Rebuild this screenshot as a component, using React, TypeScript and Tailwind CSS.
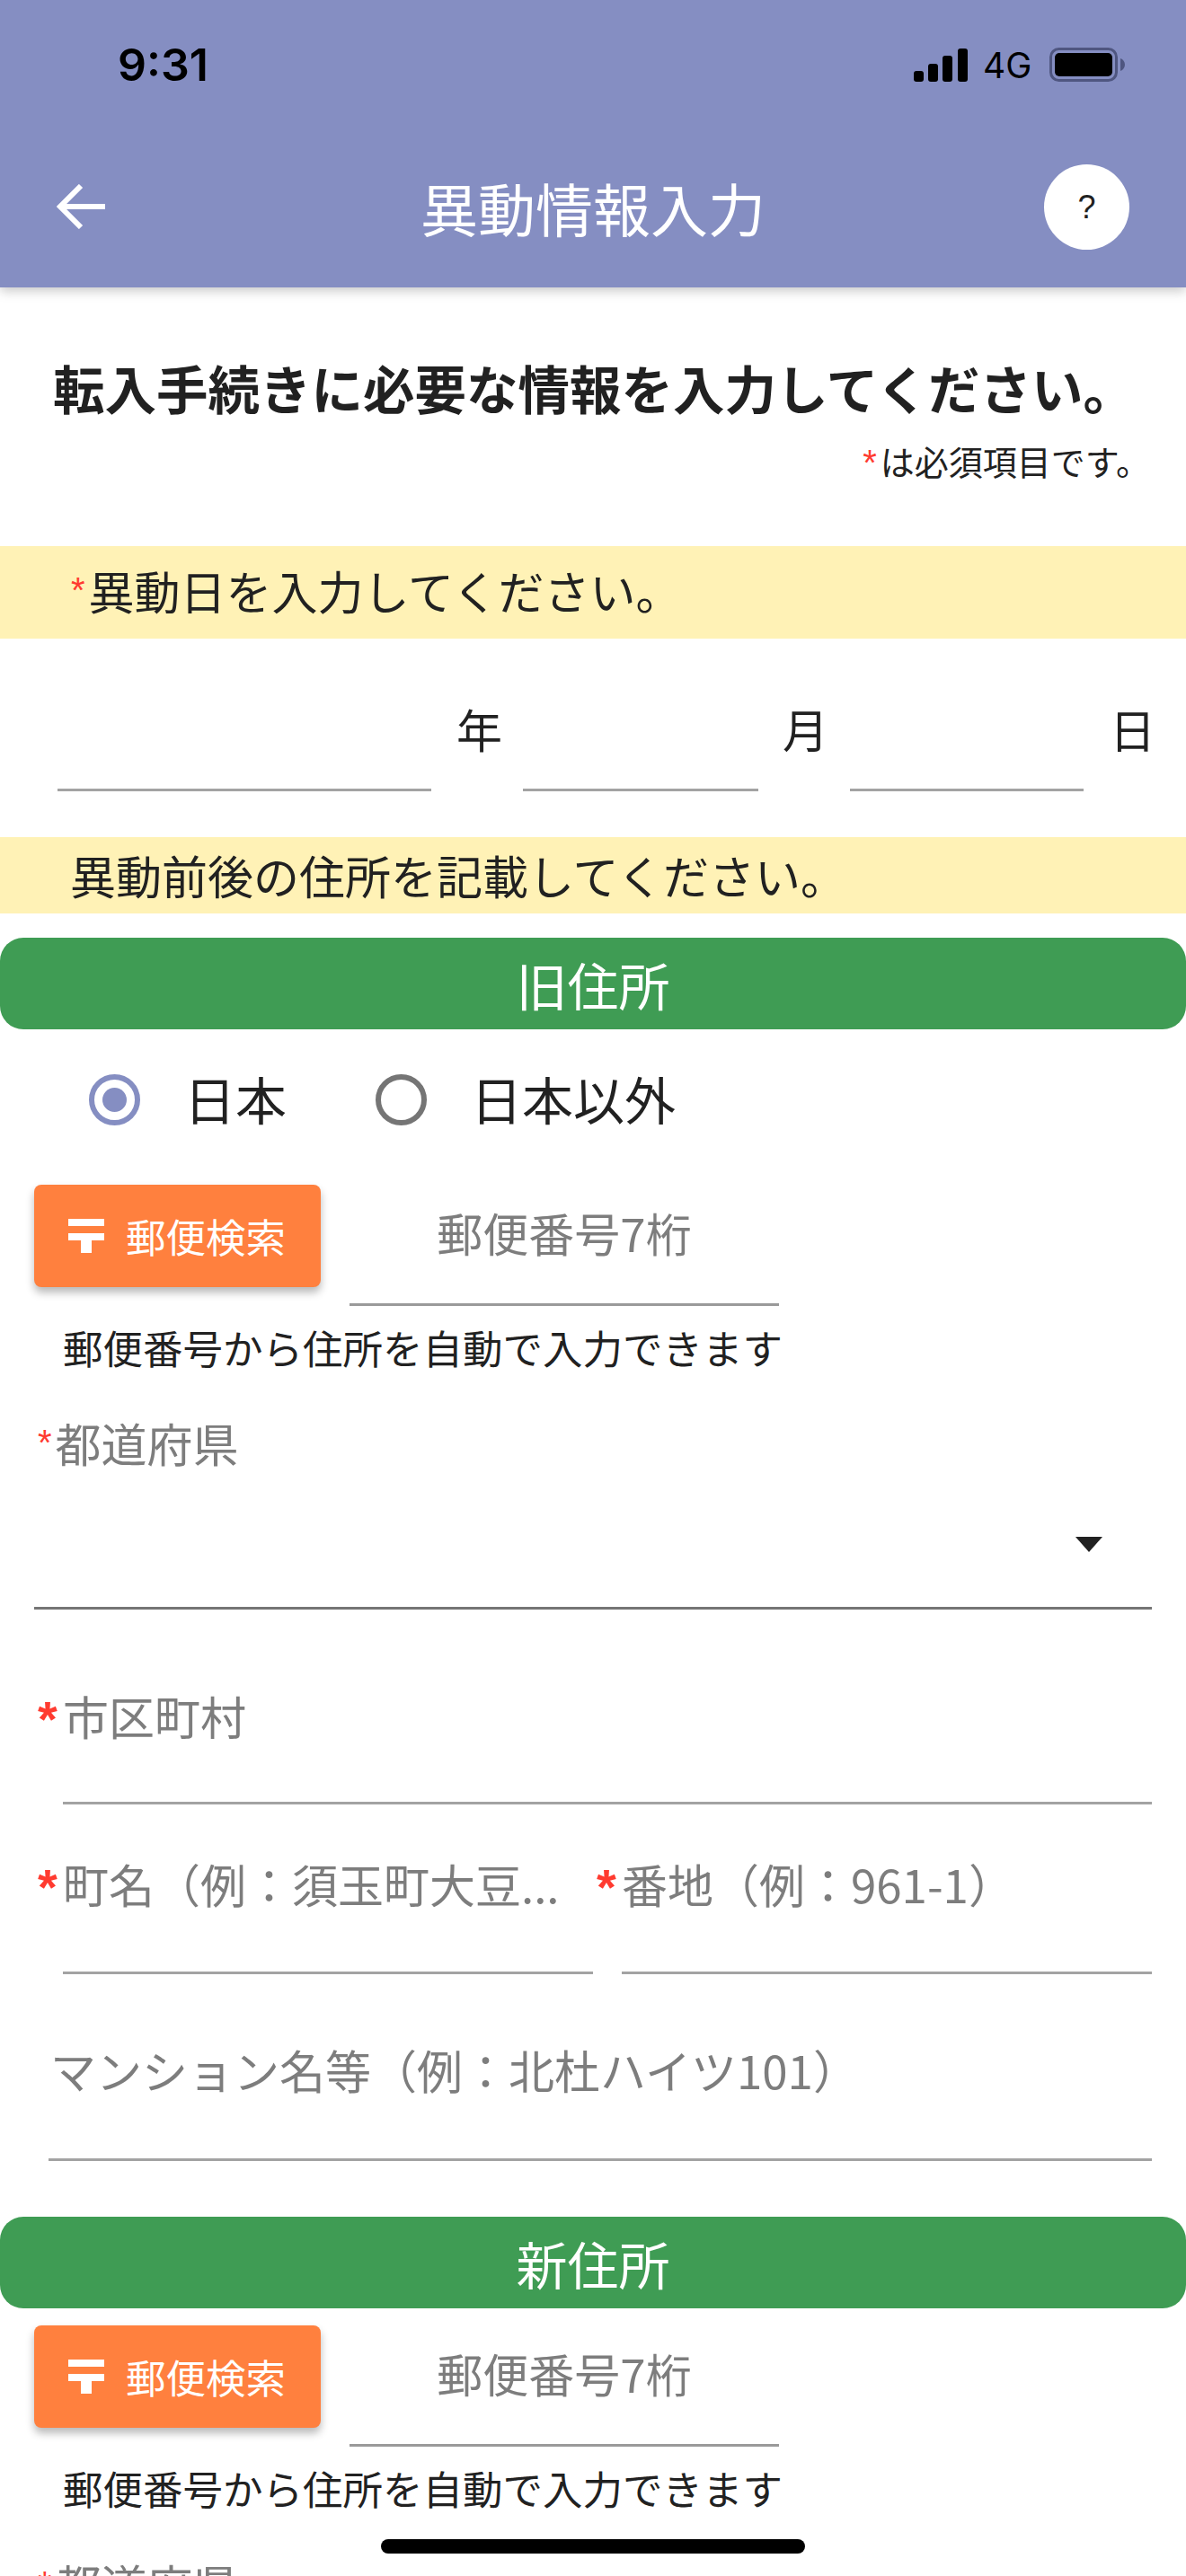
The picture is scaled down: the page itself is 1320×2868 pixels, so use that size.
import React from 'react';

const font = { fontFamily: '"Noto Sans CJK JP", sans-serif' };

const PostMark = () => (
  <svg viewBox="0 0 40 38" className="h-[38px] w-[40px] shrink-0" fill="#fff">
    <rect x="0" y="0" width="40" height="8" />
    <rect x="0" y="16" width="40" height="8" />
    <rect x="14" y="16" width="12" height="22" />
  </svg>
);

const Star = ({ size = 'small' }: { size?: 'small' | 'large' }) => (
  <span
    className={
      size === 'large'
        ? "ml-[4px] -mt-[4px] h-[44px] w-[28px] shrink-0 font-['Liberation_Sans'] text-[56px] font-bold leading-none text-[#ff3b30]"
        : "mr-[4px] font-['Liberation_Sans'] text-[40px] leading-none text-[#ff3b30]"
    }
  >
    *
  </span>
);

const SectionBar = ({ children }: { children: React.ReactNode }) => (
  <div className="flex h-[102px] items-center justify-center rounded-[26px] bg-[#3f9c54] text-[57px] leading-none text-white">
    {children}
  </div>
);

const PostalRow = () => (
  <>
    <div className="flex pl-[38px]">
      <div className="flex h-[114px] w-[319px] items-center gap-[24px] rounded-[8px] bg-[#ff803e] pl-[38px] leading-none text-white shadow-[0_6px_10px_rgba(0,0,0,0.28)]">
        <PostMark />
        <span className="text-[44.5px]">郵便検索</span>
      </div>
      <div className="ml-[32px] flex h-[135px] w-[478px] items-center justify-center border-b-[3px] border-[#9a9a9a] pb-[25px] text-[51px] leading-none text-[#7d7d7d]">
        郵便番号7桁
      </div>
    </div>
    <p className="mt-[21px] pl-[70px] text-[44.5px] leading-[50px] text-[#212121]">郵便番号から住所を自動で入力できます</p>
  </>
);

const AddressLabel = ({ label, required }: { label: string; required?: boolean }) => (
  <div className="flex items-center whitespace-nowrap">
    {required && <Star size="large" />}
    <span>{label}</span>
  </div>
);

export default function App() {
  return (
    <div style={font} className="relative h-[2868px] w-[1320px] overflow-hidden bg-white text-[#212121]">
      <header className="relative z-10 h-[320px] bg-[#858ec2] shadow-[0_4px_12px_rgba(0,0,0,0.22)]">
        <div className="flex h-[144px] items-center pl-[131px] pr-[68px]">
          <span className="font-['Inter'] text-[50px] font-semibold leading-none text-black">9:31</span>
          <div className="ml-auto flex items-center">
            <svg viewBox="0 0 60 37" className="h-[37px] w-[60px]" fill="#000">
              <rect x="0" y="25" width="11" height="12" rx="3" />
              <rect x="16" y="17" width="11" height="20" rx="3" />
              <rect x="32" y="8" width="11" height="29" rx="3" />
              <rect x="49" y="0" width="11" height="37" rx="3" />
            </svg>
            <span className="ml-[17px] w-[58px] font-['Inter'] text-[39px] leading-none text-black">4G</span>
            <svg viewBox="0 0 84 38" className="ml-[16px] h-[38px] w-[84px]">
              <rect x="1.5" y="1.5" width="73" height="35" rx="9" fill="none" stroke="#4f5680" strokeWidth="3" />
              <rect x="6" y="6" width="64" height="26" rx="5" fill="#000" />
              <path d="M79 12c3 1 5 4 5 7s-2 6-5 7z" fill="#4f5680" />
            </svg>
          </div>
        </div>
        <div className="relative flex h-[172px] items-center justify-center">
          <svg viewBox="0 0 54 50" className="absolute left-[63px] top-[61px] h-[50px] w-[54px]" fill="none" stroke="#fff" strokeWidth="6">
            <path d="M54 25H4" />
            <path d="M27 2 4 25l23 23" />
          </svg>
          <h1 className="text-[64px] leading-none text-white">異動情報入力</h1>
          <div className="absolute left-[1162px] top-[39px] flex h-[95px] w-[95px] items-center justify-center rounded-full bg-white font-['Liberation_Sans'] text-[36px] leading-none text-[#212121]">
            ?
          </div>
        </div>
      </header>

      <section className="h-[288px] pl-[59px] pr-[40px]">
        <h2 className="whitespace-nowrap pt-[76px] text-[57.5px] font-bold leading-[70px]">転入手続きに必要な情報を入力してください。</h2>
        <p className="mt-[25px] text-right text-[38px] leading-[44px]">
          <Star />は必須項目です。
        </p>
      </section>

      <div className="flex h-[103px] items-center bg-[#fff2b6] pb-[5px] pl-[79px] text-[51px] leading-none">
        <Star />異動日を入力してください。
      </div>

      <div className="flex h-[221px] items-start pl-[64px] pt-[70px] text-[51px] leading-none">
        <div className="h-[100px] w-[416px] border-b-[3px] border-[#a3a3a3]" />
        <span className="ml-[28px] mt-[5px] w-[51px]">年</span>
        <div className="ml-[23px] h-[100px] w-[262px] border-b-[3px] border-[#a3a3a3]" />
        <span className="ml-[27px] mt-[5px] w-[51px]">月</span>
        <div className="ml-[24px] h-[100px] w-[260px] border-b-[3px] border-[#a3a3a3]" />
        <span className="ml-[29px] mt-[5px] w-[51px]">日</span>
      </div>

      <div className="flex h-[85px] items-center bg-[#fff2b6] pl-[78px] text-[51px] leading-none">異動前後の住所を記載してください。</div>

      <div className="mt-[27px]">
        <SectionBar>旧住所</SectionBar>
      </div>

      <div className="flex h-[173px] items-start pl-[99px] pt-[50px] text-[57px] leading-[57px]">
        <div className="flex h-[57px] w-[57px] items-center justify-center rounded-full border-[6px] border-[#858ec2]">
          <div className="h-[27px] w-[27px] rounded-full bg-[#858ec2]" />
        </div>
        <span className="ml-[49px] -mt-[2px]">日本</span>
        <div className="ml-[99px] h-[57px] w-[57px] rounded-full border-[6px] border-[#757575]" />
        <span className="ml-[49px] -mt-[2px]">日本以外</span>
      </div>

      <PostalRow />

      <div className="mt-[51px] pl-[38px] text-[51px] leading-[60px] text-[#7d7d7d]">
        <div className="flex items-center pl-[4px]">
          <Star />
          都道府県
        </div>
        <div className="mr-[38px] flex h-[156px] items-center justify-end border-b-[3px] border-[#757575] pr-[55px] pt-[14px]">
          <svg viewBox="0 0 30 17" className="h-[17px] w-[30px]" fill="#212121">
            <path d="M0 0h30L15 17z" />
          </svg>
        </div>
      </div>

      <div className="mt-[88px] pl-[38px] text-[51px] leading-[60px] text-[#7d7d7d]">
        <AddressLabel label="市区町村" required />
        <div className="ml-[32px] mr-[38px] mt-[66px] border-b-[3px] border-[#a3a3a3]" />
      </div>

      <div className="mt-[58px] flex px-[38px] text-[51px] leading-[60px] text-[#7d7d7d]">
        <div className="w-[622px]">
          <AddressLabel label="町名（例：須玉町大豆..." required />
          <div className="ml-[32px] mt-[68px] border-b-[3px] border-[#a3a3a3]" />
        </div>
        <div className="flex-1">
          <AddressLabel label="番地（例：961-1）" required />
          <div className="ml-[32px] mt-[68px] border-b-[3px] border-[#a3a3a3]" />
        </div>
      </div>

      <div className="ml-[54px] mr-[38px] mt-[76px] border-b-[3px] border-[#a3a3a3] pb-[69px] text-[51px] leading-[60px] text-[#7d7d7d]">
        <span className="pl-[2px]">マンション名等（例：北杜ハイツ101）</span>
      </div>

      <div className="mt-[62px]">
        <SectionBar>新住所</SectionBar>
      </div>

      <div className="mt-[19px]">
        <PostalRow />
      </div>

      <div className="mt-[52px] flex items-center pl-[42px] text-[51px] leading-[60px] text-[#7d7d7d]">
        <Star />
        都道府県
      </div>

      <div className="absolute bottom-[25px] left-[424px] h-[16px] w-[472px] rounded-full bg-black" />
    </div>
  );
}
